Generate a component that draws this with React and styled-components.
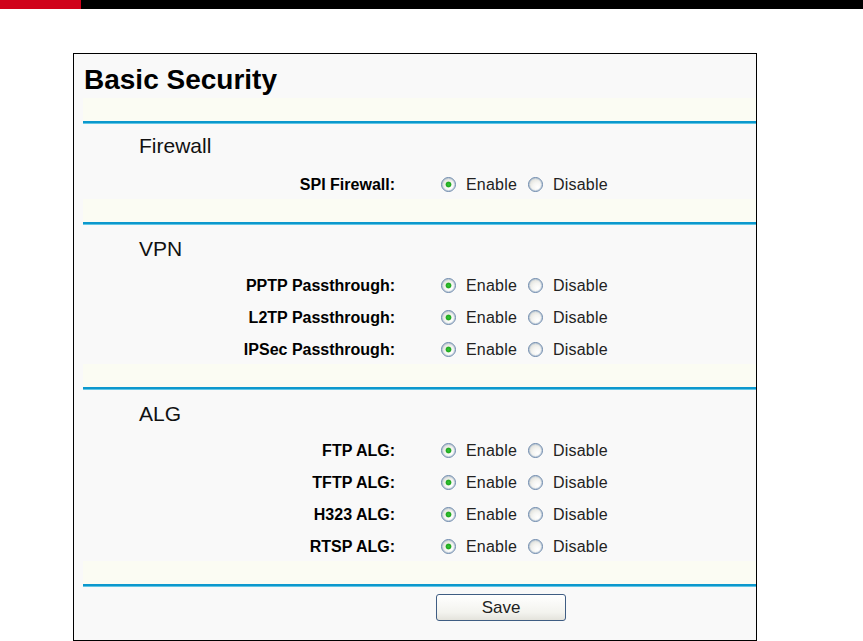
import React from "react";
import styled, { createGlobalStyle } from "styled-components";

const GlobalStyle = createGlobalStyle`
  body {
    margin: 0;
    background: #fff;
    font-family: "Liberation Sans", Arial, sans-serif;
  }
`;

const sections = [
  { title: "Firewall", rows: ["SPI Firewall:"] },
  { title: "VPN", rows: ["PPTP Passthrough:", "L2TP Passthrough:", "IPSec Passthrough:"] },
  { title: "ALG", rows: ["FTP ALG:", "TFTP ALG:", "H323 ALG:", "RTSP ALG:"] },
];

const TopBar = styled.div`
  display: flex;
  height: 9px;
  background: #000;
`;

const RedMark = styled.div`
  width: 81px;
  background: #d0021b;
`;

const Page = styled.div`
  padding: 44px 0 0 73px;
`;

const Panel = styled.div`
  box-sizing: border-box;
  width: 684px;
  height: 588px;
  border: 1px solid #000;
  background: #f9f9f9;
  padding-left: 9px;
`;

const Title = styled.h1`
  margin: 0;
  height: 44px;
  box-sizing: border-box;
  padding: 8px 0 0 1px;
  font-size: 28px;
  line-height: 36px;
  font-weight: bold;
  color: #000;
`;

const Strip = styled.div`
  height: 23px;
  background: #fbfcf3;
`;

const BlueLine = styled.div`
  height: 1px;
  border-top: 2px solid #0c98cd;
  background: #62c6e4;
`;

const Heading = styled.div`
  height: 43px;
  box-sizing: border-box;
  padding: ${(p) => (p.$first ? 0 : 2)}px 0 0 56px;
  font-size: 21px;
  line-height: 43px;
  color: #111;
`;

const Row = styled.div`
  display: grid;
  grid-template-columns: 312px 1fr;
  height: 32px;
  box-sizing: border-box;
  padding-top: 3px;
  align-items: center;
`;

const Label = styled.div`
  text-align: right;
  font-size: 16px;
  font-weight: bold;
  color: #000;
`;

const Options = styled.div`
  display: flex;
  align-items: center;
  padding-left: 46px;
`;

const Choice = styled.label`
  display: inline-flex;
  align-items: center;
  margin-right: 11px;
  font-size: 16px;
  letter-spacing: 0.2px;
  color: #222;
`;

const Radio = styled.input.attrs({ type: "radio" })`
  appearance: none;
  box-sizing: border-box;
  width: 15px;
  height: 15px;
  margin: 0 10px 0 0;
  border-radius: 50%;
  border: 1.5px solid #6a87ab;
  background: radial-gradient(circle at 65% 70%, #ffffff 0%, #f4f4f1 40%, #d3d3cb 100%);
  box-shadow: inset 0 0 0 1px rgba(170, 190, 212, 0.6);
  &:checked {
    background:
      radial-gradient(circle, #34c434 0, #1fa71f 2.5px, transparent 3.3px),
      radial-gradient(circle at 65% 70%, #ffffff 0%, #f4f4f1 40%, #d3d3cb 100%);
  }
`;

const ButtonRow = styled.div`
  padding: 7px 0 0 353px;
`;

const SaveButton = styled.button`
  width: 130px;
  height: 27px;
  border: 1px solid #3f5d83;
  border-radius: 3px;
  background: linear-gradient(#ffffff, #f3f3ee 70%, #e4e3dc);
  font-family: "Liberation Sans", Arial, sans-serif;
  font-size: 17px;
  color: #222;
  padding: 0;
`;

const OptionRow = ({ label, name }) => (
  <Row>
    <Label>{label}</Label>
    <Options>
      <Choice>
        <Radio name={name} defaultChecked />
        Enable
      </Choice>
      <Choice>
        <Radio name={name} />
        Disable
      </Choice>
    </Options>
  </Row>
);

export default function App() {
  return (
    <>
      <GlobalStyle />
      <TopBar>
        <RedMark />
      </TopBar>
      <Page>
        <Panel>
          <Title>Basic Security</Title>
          <Strip />
          <BlueLine />
          {sections.map((s, i) => (
            <div key={s.title}>
              <Heading $first={i === 0}>{s.title}</Heading>
              {s.rows.map((r) => (
                <OptionRow key={r} label={r} name={r} />
              ))}
              <Strip />
              <BlueLine />
            </div>
          ))}
          <ButtonRow>
            <SaveButton>Save</SaveButton>
          </ButtonRow>
        </Panel>
      </Page>
    </>
  );
}
